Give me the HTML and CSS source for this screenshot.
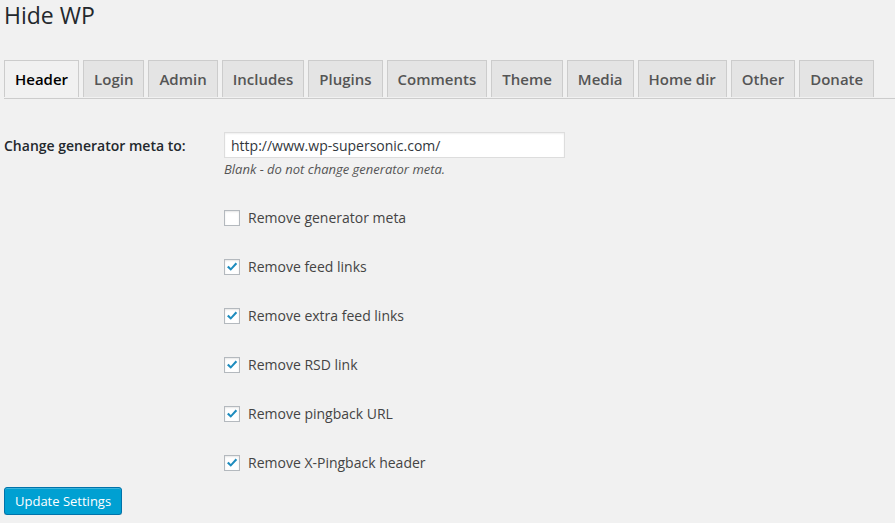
FILE: index.html
```html
<!DOCTYPE html>
<html lang="en">
<head>
<meta charset="utf-8">
<title>Hide WP</title>
<link rel="stylesheet" href="styles.css">
</head>
<body>
<div class="wrap">
  <h1 class="page-title">Hide WP</h1>
  <nav class="tabs">
    <a class="tab active">Header</a>
    <a class="tab">Login</a>
    <a class="tab">Admin</a>
    <a class="tab">Includes</a>
    <a class="tab">Plugins</a>
    <a class="tab">Comments</a>
    <a class="tab">Theme</a>
    <a class="tab">Media</a>
    <a class="tab">Home dir</a>
    <a class="tab">Other</a>
    <a class="tab">Donate</a>
  </nav>
  <form class="settings">
    <div class="settings-row">
      <div class="field-label">Change generator meta to:</div>
      <div class="field">
        <input class="text-input" type="text" value="http://www.wp-supersonic.com/">
        <p class="description">Blank - do not change generator meta.</p>
      </div>
    </div>
    <div class="options">
      <label class="option"><span class="checkbox"></span>Remove generator meta</label>
      <label class="option"><span class="checkbox"><svg viewBox="0 0 16 16" width="16" height="16"><polygon points="3,8.2 4.6,6.8 6.8,9 11.6,3.6 13.2,5 6.8,11.8" fill="#1e8cbe"/></svg></span>Remove feed links</label>
      <label class="option"><span class="checkbox"><svg viewBox="0 0 16 16" width="16" height="16"><polygon points="3,8.2 4.6,6.8 6.8,9 11.6,3.6 13.2,5 6.8,11.8" fill="#1e8cbe"/></svg></span>Remove extra feed links</label>
      <label class="option"><span class="checkbox"><svg viewBox="0 0 16 16" width="16" height="16"><polygon points="3,8.2 4.6,6.8 6.8,9 11.6,3.6 13.2,5 6.8,11.8" fill="#1e8cbe"/></svg></span>Remove RSD link</label>
      <label class="option"><span class="checkbox"><svg viewBox="0 0 16 16" width="16" height="16"><polygon points="3,8.2 4.6,6.8 6.8,9 11.6,3.6 13.2,5 6.8,11.8" fill="#1e8cbe"/></svg></span>Remove pingback URL</label>
      <label class="option"><span class="checkbox"><svg viewBox="0 0 16 16" width="16" height="16"><polygon points="3,8.2 4.6,6.8 6.8,9 11.6,3.6 13.2,5 6.8,11.8" fill="#1e8cbe"/></svg></span>Remove X-Pingback header</label>
    </div>
    <button class="button-primary" type="button">Update Settings</button>
  </form>
</div>
</body>
</html>
```

FILE: styles.css
```css
html, body {
  margin: 0;
  padding: 0;
  background: #f1f1f1;
}

body {
  font-family: "Open Sans", "Noto Sans", sans-serif;
  font-size: 13px;
  color: #444;
}

.wrap {
  padding: 0 0 0 4px;
}

.page-title {
  margin: 0;
  padding: 1px 0 0;
  font-size: 23px;
  line-height: 29px;
  font-weight: 400;
  color: #23282d;
}

.tabs {
  display: flex;
  gap: 4px;
  margin-top: 30px;
  padding-bottom: 1px;
  border-bottom: 1px solid #ccc;
}

.tab {
  display: block;
  padding: 6px 10px;
  border: 1px solid #ccc;
  border-bottom: none;
  background: #e4e4e4;
  color: #555;
  font-size: 15px;
  line-height: 24px;
  font-weight: 600;
  text-decoration: none;
}

.tab.active {
  background: #f1f1f1;
  color: #000;
}

.settings {
  margin: 16px 0 0;
}

.settings-row {
  display: grid;
  grid-template-columns: 220px 1fr;
}

.field-label {
  padding-top: 20px;
  font-size: 14px;
  line-height: 21px;
  font-weight: 600;
  color: #23282d;
}

.field {
  padding-top: 17px;
}

.text-input {
  display: block;
  box-sizing: border-box;
  width: 341px;
  height: 26px;
  margin: 0;
  padding: 3px 6px;
  border: 1px solid #ddd;
  background: #fff;
  box-shadow: inset 0 1px 2px rgba(0, 0, 0, 0.07);
  font-family: "Open Sans", "Noto Sans", sans-serif;
  font-size: 14px;
  color: #32373c;
  outline: none;
}

.description {
  margin: 2px 0 0;
  font-size: 13px;
  line-height: 18px;
  font-style: italic;
  color: #555;
}

.options {
  margin: 15px 0 0 220px;
}

.option {
  display: flex;
  align-items: center;
  height: 49px;
  font-size: 14px;
  color: #444;
}

.checkbox {
  box-sizing: border-box;
  width: 16px;
  height: 16px;
  margin-right: 8px;
  border: 1px solid #b4b9be;
  background: #fff;
  box-shadow: inset 0 1px 2px rgba(0, 0, 0, 0.1);
  position: relative;
}

.checkbox svg {
  position: absolute;
  left: -1px;
  top: -1px;
}

.button-primary {
  display: block;
  box-sizing: border-box;
  height: 28px;
  margin: 0;
  padding: 0 10px 1px;
  border: 1px solid #0073aa;
  border-radius: 3px;
  background: #00a0d2;
  box-shadow: inset 0 1px 0 rgba(120, 200, 230, 0.5), 0 1px 0 rgba(0, 0, 0, 0.15);
  color: #fff;
  font-family: "Open Sans", "Noto Sans", sans-serif;
  font-size: 13px;
  line-height: 26px;
}
```
